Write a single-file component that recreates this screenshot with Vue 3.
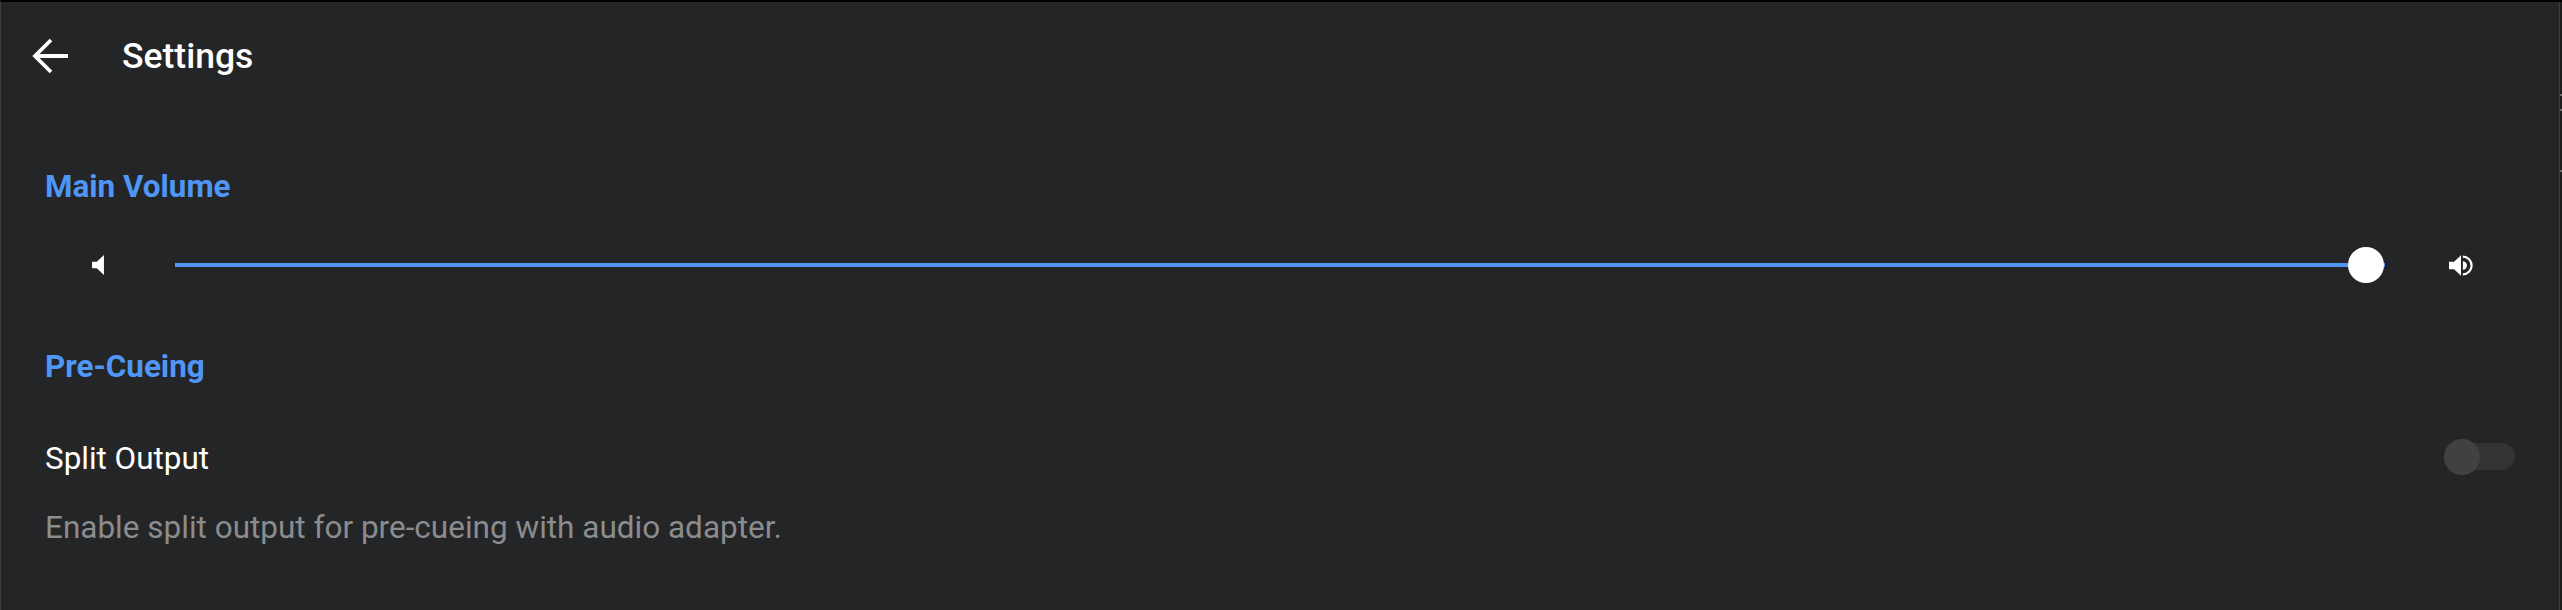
<script setup>
const sliderValue = 100
const edgeTicks = [94, 109, 170]
</script>

<template>
  <div class="screen">
    <header class="toolbar">
      <svg class="back" viewBox="0 0 36 36" width="36" height="36">
        <path d="M36 18H3M19 2L3 18L19 34" fill="none" stroke="#fff" stroke-width="3.8" />
      </svg>
      <span class="title">Settings</span>
    </header>

    <section class="volume">
      <h2 class="section">Main Volume</h2>
      <div class="slider-row">
        <div class="icon-cell">
          <svg viewBox="0 0.5 12.5 21" width="12" height="20">
            <path d="M0 7.5H5L12.5 0.5V21.5L5 14.5H0Z" fill="#fff" />
          </svg>
        </div>
        <div class="slider">
          <div class="fill" :style="{ width: sliderValue + '%' }"></div>
          <div class="thumb"></div>
        </div>
        <div class="icon-cell">
          <svg viewBox="0 0.5 26 23" width="24" height="23">
            <path d="M0 8H5.5L13 1V23L5.5 16H0Z" fill="#fff" />
            <path d="M15 7.5A4.5 4.5 0 0 1 15 16.5Z" fill="#fff" />
            <path d="M15 2.5A9.5 9.5 0 0 1 15 21.5" fill="none" stroke="#fff" stroke-width="2.4" />
          </svg>
        </div>
      </div>
    </section>

    <section class="precue">
      <h2 class="section">Pre-Cueing</h2>
      <div class="setting">
        <div class="setting-text">
          <div class="setting-name">Split Output</div>
          <div class="setting-desc">Enable split output for pre-cueing with audio adapter.</div>
        </div>
        <div class="switch">
          <div class="switch-thumb"></div>
        </div>
      </div>
    </section>

    <div class="edge">
      <div v-for="y in edgeTicks" :key="y" class="tick" :style="{ top: y + 'px' }"></div>
    </div>
  </div>
</template>

<style>
html, body {
  margin: 0;
  background: #242527;
}
</style>

<style scoped>
.screen {
  position: relative;
  width: 2562px;
  height: 610px;
  box-sizing: border-box;
  overflow: hidden;
  background: #242527;
  border-top: 2px solid #000;
  border-left: 1px solid #3a3b3d;
  font-family: Roboto, "Liberation Sans", sans-serif;
  color: #fff;
}

.toolbar {
  display: flex;
  align-items: center;
  height: 108px;
  padding-left: 31px;
}
.back {
  flex: none;
}
.title {
  margin-left: 54px;
  font-size: 35.5px;
  font-weight: 500;
}

.section {
  margin: 0;
  padding-left: 44px;
  font-size: 31.4px;
  font-weight: 700;
  line-height: 40px;
  color: #4f96f6;
}

.volume {
  margin-top: 57px;
}
.slider-row {
  display: flex;
  align-items: center;
  height: 70px;
  margin-top: 23px;
  padding-left: 45px;
}
.icon-cell {
  display: flex;
  justify-content: center;
  width: 104px;
}
.slider {
  position: relative;
  width: 2210px;
  height: 4px;
  margin: 0 24px 0 25px;
  background: #4f96f6;
}
.fill {
  height: 100%;
  background: #4f96f6;
}
.thumb {
  position: absolute;
  right: 1px;
  top: -16px;
  width: 36px;
  height: 36px;
  border-radius: 50%;
  background: #fff;
}

.precue {
  margin-top: 47px;
}
.setting {
  display: flex;
  justify-content: space-between;
  padding: 0 47px 0 44px;
  margin-top: 52px;
}
.setting-name {
  font-size: 31.4px;
  line-height: 40px;
}
.setting-desc {
  margin-top: 29px;
  font-size: 31.5px;
  line-height: 40px;
  color: #8b8c8e;
}
.switch {
  position: relative;
  width: 70px;
  height: 27px;
  margin-top: 4px;
  border-radius: 14px;
  background: #323335;
}
.switch-thumb {
  position: absolute;
  left: -1px;
  top: -4px;
  width: 36px;
  height: 36px;
  border-radius: 50%;
  background: #404143;
}

.edge {
  position: absolute;
  top: -2px;
  right: 0;
  bottom: 0;
  width: 2px;
  background: #1c1d1f;
  border-left: 1px solid #3a3b3d;
}
.tick {
  position: absolute;
  left: 0;
  width: 2px;
  height: 2px;
  background: #6a6b6d;
}
</style>
